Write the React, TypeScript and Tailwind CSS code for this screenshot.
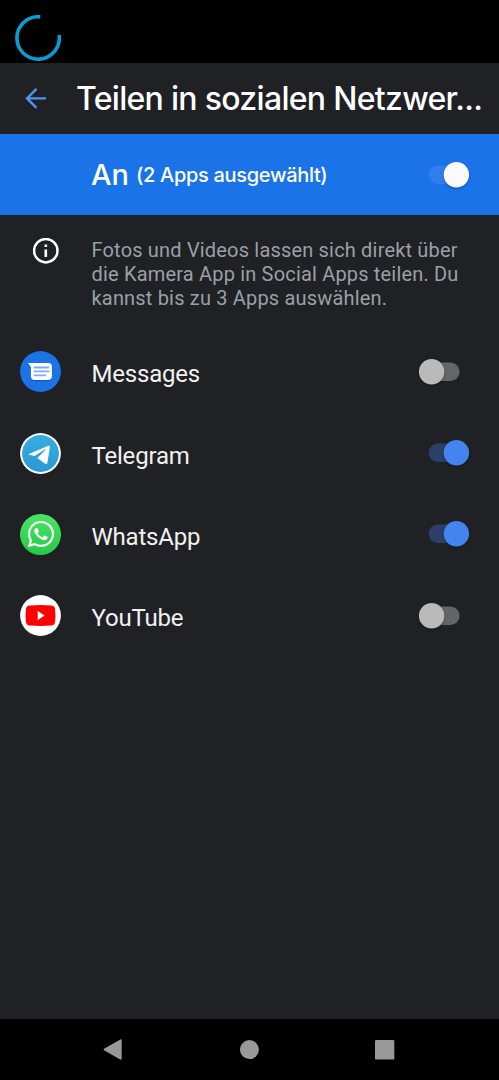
import React, { useState } from 'react'
import { FaWhatsapp } from 'react-icons/fa'

type TApp = {
  name: string
  icon: React.ReactNode
  selected: boolean
}

type SwitchProps = {
  label: string
  checked: boolean
  onChange: () => void
  light?: boolean
}

function Switch({ label, checked, onChange, light = false }: SwitchProps) {
  let track = checked ? '#2a4068' : '#646567';
  let thumb = checked ? '#4384f1' : '#bababa';
  if (light) {
    track = '#307dec';
    thumb = '#fafafa';
  }

  return (
    <button role="switch" aria-checked={checked} aria-label={label} onClick={onChange} className="block h-8 w-14 shrink-0">
      <svg viewBox="0 0 56 32" className="h-8 w-14">
        <rect x="12.6" y="6.6" width="31" height="18.4" rx="9.2" fill={track} />
        <circle
          cx={checked ? 40.4 : 15.6}
          cy="15.8"
          r="12.7"
          fill={thumb}
          className="drop-shadow-[0_1px_1px_rgba(0,0,0,0.3)]"
        />
      </svg>
    </button>
  )
}

function MessagesIcon() {
  return (
    <svg viewBox="0 0 41 41" className="size-[41px]">
      <circle cx="20.5" cy="20.5" r="20.4" fill="#1b73e8" />
      <path d="M8 13.2h20.3a3.6 3.6 0 0 1 3.6 3.6v9.8a3.6 3.6 0 0 1-3.6 3.6H14.5a3.6 3.6 0 0 1-3.6-3.6V17.3z" fill="#1559b8" />
      <path d="M8 12.1h20.3a3.6 3.6 0 0 1 3.6 3.6v9.6a3.6 3.6 0 0 1-3.6 3.6H14.5a3.6 3.6 0 0 1-3.6-3.6V16.2z" fill="#fff" />
      <path d="M14.5 16.5h14M14.5 20.4h14M14.5 24.4h10.7" stroke="#80aaf5" strokeWidth="1.9" strokeLinecap="round" />
    </svg>
  )
}

function TelegramIcon() {
  return (
    <svg viewBox="0 0 41 41" className="size-[41px]">
      <defs>
        <linearGradient id="telegram" x1="0" y1="0" x2="0" y2="1">
          <stop offset="0" stopColor="#37aee2" />
          <stop offset="1" stopColor="#2998d2" />
        </linearGradient>
      </defs>
      <circle cx="20.5" cy="20.5" r="20.4" fill="#fff" />
      <circle cx="20.5" cy="20.5" r="18.4" fill="url(#telegram)" />
      <path d="M8.9 20.9 28.3 12.8q1.8-.6 1.6 1.1L27.4 29.8q-.5 2-2.2.9l-7.9-5.8 8.5-8.2q.5-.8-.5-.4L14.6 23.1l-5.4-1.3q-1-.4-.3-.9z" fill="#fff" />
    </svg>
  )
}

function WhatsAppIcon() {
  return (
    <span className="flex size-[41px] items-center justify-center rounded-full bg-linear-to-b from-[#48e665] to-[#25c947] text-white">
      <FaWhatsapp size={30} />
    </span>
  )
}

function YouTubeIcon() {
  return (
    <svg viewBox="0 0 41 41" className="size-[41px]">
      <circle cx="20.5" cy="20.5" r="20.4" fill="#fff" />
      <path d="M10 10.5q10.5-.9 21 0 3.7.2 4.1 4 .7 6 0 12-.4 3.8-4.1 4-10.5.9-21 0-3.7-.2-4.1-4-.7-6 0-12 .4-3.8 4.1-4z" fill="#f00" />
      <path d="M17.7 16.1V25l7-4.4z" fill="#fff" />
    </svg>
  )
}

const initialApps: TApp[] = [
  { name: 'Messages', icon: <MessagesIcon />, selected: false },
  { name: 'Telegram', icon: <TelegramIcon />, selected: true },
  { name: 'WhatsApp', icon: <WhatsAppIcon />, selected: true },
  { name: 'YouTube', icon: <YouTubeIcon />, selected: false },
]

export default function App() {

  const [enabled, setEnabled] = useState(true);
  const [apps, setApps] = useState(initialApps);

  const selectedCount = apps.filter(app => app.selected).length;

  const toggleApp = (name: string): void => {
    setApps(apps.map(app => app.name === name ? { ...app, selected: !app.selected } : app));
  }

  return (
    <div className="flex h-[1080px] w-[499px] flex-col overflow-hidden bg-[#202124] font-['Roboto',sans-serif] text-[#f1f1f1]">
      {/* Status bar */}
      <div className="h-[63px] shrink-0 bg-black pt-[15px] pl-[15px]">
        <svg viewBox="0 0 46 46" className="size-[46px]" fill="none">
          <path d="M25.3 1.9A21.2 21.2 0 1 0 44.1 20" stroke="#0a9dd2" strokeWidth="3.6" />
        </svg>
      </div>

      <header className="flex h-[71px] shrink-0 items-center pl-[25px]">
        <button aria-label="Zurück">
          <svg viewBox="0 0 22 22" className="size-[22px]" fill="none" stroke="#4e93ed" strokeWidth="2.4">
            <path d="M21 10.4H2.5M11.5.9 2 10.4l9.5 9.5" />
          </svg>
        </button>
        <h1 className="ml-[29px] font-['Inter',sans-serif] text-[32px] font-medium tracking-[-0.7px] whitespace-nowrap text-white">
          Teilen in sozialen Netzwer...
        </h1>
      </header>

      <section className="flex h-[81px] shrink-0 items-center bg-[#1b73e8] pr-[27px] pl-[91px] font-['Inter',sans-serif] text-white">
        <div className="flex flex-1 items-center whitespace-nowrap">
          <span className="text-[29px] font-medium">{enabled ? 'An' : 'Aus'}</span>
          <span className="ml-[7px] text-xl font-medium tracking-[-0.32px]">({selectedCount} Apps ausgewählt)</span>
        </div>
        <Switch label="Teilen" checked={enabled} onChange={() => setEnabled(!enabled)} light />
      </section>

      <main className="flex-1">
        <div className="flex h-[116.4px] pt-[23px] pl-[33px]">
          <svg viewBox="0 0 26 26" className="size-[26px] shrink-0">
            <circle cx="12.8" cy="12.7" r="11.7" fill="none" stroke="#fff" strokeWidth="2.5" />
            <path d="M11.5 6.4h2.6V9h-2.6zM11.5 11.5h2.6V19h-2.6z" fill="#fff" />
          </svg>
          <p className="ml-[32.5px] text-xl leading-6 tracking-[0.18px] whitespace-nowrap text-[#9aa0a6]">
            Fotos und Videos lassen sich direkt über<br />
            die Kamera App in Social Apps teilen. Du<br />
            kannst bis zu 3 Apps auswählen.
          </p>
        </div>

        <ul>
          {apps.map(app => (
            <li key={app.name} className="flex h-[81.2px] items-center pr-[27px] pl-5">
              {app.icon}
              <span className="ml-[30.5px] flex-1 pt-[5px] text-2xl tracking-[-0.2px]">{app.name}</span>
              <Switch label={app.name} checked={app.selected} onChange={() => toggleApp(app.name)} />
            </li>
          ))}
        </ul>
      </main>

      {/* Navigation bar */}
      <nav className="flex h-[61px] shrink-0 items-center bg-black">
        <svg viewBox="0 0 499 61" className="h-[61px] w-[499px]" fill="#999">
          <path d="M104 29.8q-.7.7 0 1.4l16.3 9.3q1.4.6 1.4-.9V21.3q0-1.5-1.4-.9z" />
          <circle cx="249.4" cy="30.6" r="9.5" />
          <rect x="375" y="21" width="19.3" height="19.5" rx="1.2" />
        </svg>
      </nav>
    </div>
  )
}
